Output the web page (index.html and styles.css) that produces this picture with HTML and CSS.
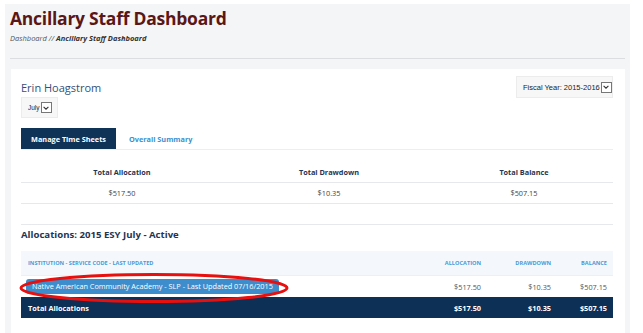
FILE: index.html
```html
<!DOCTYPE html>
<html>
<head>
<meta charset="utf-8">
<link rel="stylesheet" href="styles.css">
</head>
<body>
<div class="page">
  <header class="page-head">
    <h1 class="title">Ancillary Staff Dashboard</h1>
    <div class="crumbs">Dashboard // <b>Ancillary Staff Dashboard</b></div>
  </header>
  <section class="card">
    <div class="card-top">
      <div class="who">
        <div class="name">Erin Hoagstrom</div>
        <div class="select select-month">
          <span class="select-text">July</span>
          <span class="select-btn"><svg viewBox="0 0 10 10" width="8" height="8"><path d="M2 3.5 L5 6.5 L8 3.5" fill="none" stroke="#333" stroke-width="1.4"/></svg></span>
        </div>
      </div>
      <div class="select select-year">
        <span class="select-text">Fiscal Year: 2015-2016</span>
        <span class="select-btn"><svg viewBox="0 0 10 10" width="8" height="8"><path d="M2 3.5 L5 6.5 L8 3.5" fill="none" stroke="#333" stroke-width="1.4"/></svg></span>
      </div>
    </div>

    <nav class="tabs">
      <span class="tab tab-active">Manage Time Sheets</span>
      <span class="tab">Overall Summary</span>
    </nav>

    <table class="summary">
      <colgroup><col class="c1"><col class="c2"><col class="c3"></colgroup>
      <thead>
        <tr><th>Total Allocation</th><th>Total Drawdown</th><th>Total Balance</th></tr>
      </thead>
      <tbody>
        <tr><td>$517.50</td><td>$10.35</td><td>$507.15</td></tr>
        <tr class="empty"><td></td><td></td><td></td></tr>
      </tbody>
    </table>

    <h2 class="alloc-title">Allocations: 2015 ESY July - Active</h2>

    <div class="alloc-wrap">
      <table class="alloc">
        <colgroup><col class="a1"><col class="a2"><col class="a3"><col class="a4"></colgroup>
        <thead>
          <tr><th class="left">Institution - Service Code - Last Updated</th><th>Allocation</th><th>Drawdown</th><th>Balance</th></tr>
        </thead>
        <tbody>
          <tr class="row">
            <td class="left"><span class="pill">Native American Community Academy - SLP - Last Updated 07/16/2015</span></td>
            <td>$517.50</td><td>$10.35</td><td>$507.15</td>
          </tr>
          <tr class="total">
            <td class="left">Total Allocations</td>
            <td>$517.50</td><td>$10.35</td><td>$507.15</td>
          </tr>
        </tbody>
      </table>
      <svg class="ring" viewBox="0 0 270 30" width="270" height="30"><ellipse cx="135" cy="15" rx="133" ry="13.5" fill="none" stroke="#e8100f" stroke-width="3"/></svg>
    </div>
  </section>
</div>
</body>
</html>
```

FILE: styles.css
```css
html, body {
  margin: 0;
  padding: 0;
  background: #ffffff;
  font-family: "Open Sans", "Liberation Sans", sans-serif;
}

.page {
  margin: 4px 13px 0 5px;
  background: #f4f5f7;
  height: 329px;
  overflow: hidden;
}

.page-head {
  margin: 0 5px;
  padding: 2px 0 0 0;
  height: 52px;
  border-bottom: 1px solid #dcdde0;
}

.title {
  margin: 0;
  font-size: 17.5px;
  line-height: 24px;
  font-weight: 700;
  letter-spacing: -0.25px;
  color: #5b1616;
}

.crumbs {
  margin-top: 2px;
  font-size: 7.5px;
  line-height: 12px;
  font-style: italic;
  color: #555;
}
.crumbs b { color: #333; }

.card {
  margin: 10px 5px 0 6px;
  background: #ffffff;
  padding: 7px 12px 20px 10px;
  height: 260px;
}

.card-top {
  display: flex;
  justify-content: space-between;
  align-items: flex-start;
}

.name {
  margin-top: 5px;
  font-size: 11px;
  line-height: 14px;
  color: #34507a;
}

.select {
  display: flex;
  align-items: center;
  background: #f7f7f7;
  border: 1px solid #ececec;
  font-family: "Liberation Sans", Arial, sans-serif;
  color: #222;
  box-sizing: border-box;
}
.select-month {
  margin-top: 2px;
  width: 37px;
  height: 21px;
  padding-left: 6px;
  font-size: 6.5px;
}
.select-year {
  width: 97px;
  height: 22px;
  padding-left: 6px;
  font-size: 7.5px;
}
.select-text { margin-right: 1px; }
.select-btn {
  display: flex;
  align-items: center;
  justify-content: center;
  width: 9px;
  height: 9px;
  background: #fff;
  border: 1px solid #777;
}

.tabs {
  display: flex;
  align-items: stretch;
  margin-top: 10px;
  height: 21px;
  border-bottom: 1px solid #eceef0;
}
.tab {
  display: flex;
  align-items: center;
  font-size: 7.3px;
  font-weight: 700;
  color: #3b91d2;
  padding: 0 12px 0 13px;
}
.tab-active {
  background: #0f3357;
  color: #ffffff;
  width: 95px;
  box-sizing: border-box;
  justify-content: center;
  padding: 0;
}

.summary {
  width: 100%;
  border-collapse: collapse;
  table-layout: fixed;
  margin-top: 11px;
  font-size: 7.3px;
}
.summary .c1 { width: 202px; }
.summary .c2 { width: 212px; }
.summary .c3 { width: 178px; }
.summary th {
  height: 21px;
  padding: 0;
  font-weight: 700;
  color: #1f3553;
  border-bottom: 1px solid #e6e8eb;
  vertical-align: middle;
}
.summary td {
  height: 20px;
  padding: 0;
  text-align: center;
  color: #444;
  border-bottom: 1px solid #e6e8eb;
}

.alloc-title {
  margin: 3px 0 0 0;
  font-size: 9.6px;
  line-height: 14px;
  font-weight: 700;
  color: #1f3553;
}

.alloc-wrap {
  position: relative;
  margin-top: 9px;
}
.alloc {
  width: 100%;
  border-collapse: collapse;
  table-layout: fixed;
  font-size: 7.3px;
}
.alloc .a1 { width: auto; }
.alloc .a2 { width: 90px; }
.alloc .a3 { width: 70px; }
.alloc .a4 { width: 56px; }
.alloc th {
  background: #f4f8fc;
  height: 24px;
  padding: 0 6px 0 0;
  font-size: 5.6px;
  font-weight: 700;
  text-transform: uppercase;
  color: #4a9ad6;
  text-align: right;
  border-bottom: 1px solid #edf0f3;
}
.alloc td {
  height: 21px;
  padding: 0 6px 0 0;
  text-align: right;
  color: #555;
}
.alloc .left { text-align: left; padding-left: 7px; }
.alloc .row td.left { padding-left: 5px; }
.pill {
  display: inline-block;
  background: #3d8dcc;
  color: #ffffff;
  font-size: 7.3px;
  line-height: 15px;
  padding: 0 6px;
  border-radius: 3px;
  white-space: nowrap;
}
.alloc .total td {
  background: #0d3056;
  color: #ffffff;
  font-weight: 700;
}

.ring {
  position: absolute;
  left: -2px;
  top: 22px;
}
```
